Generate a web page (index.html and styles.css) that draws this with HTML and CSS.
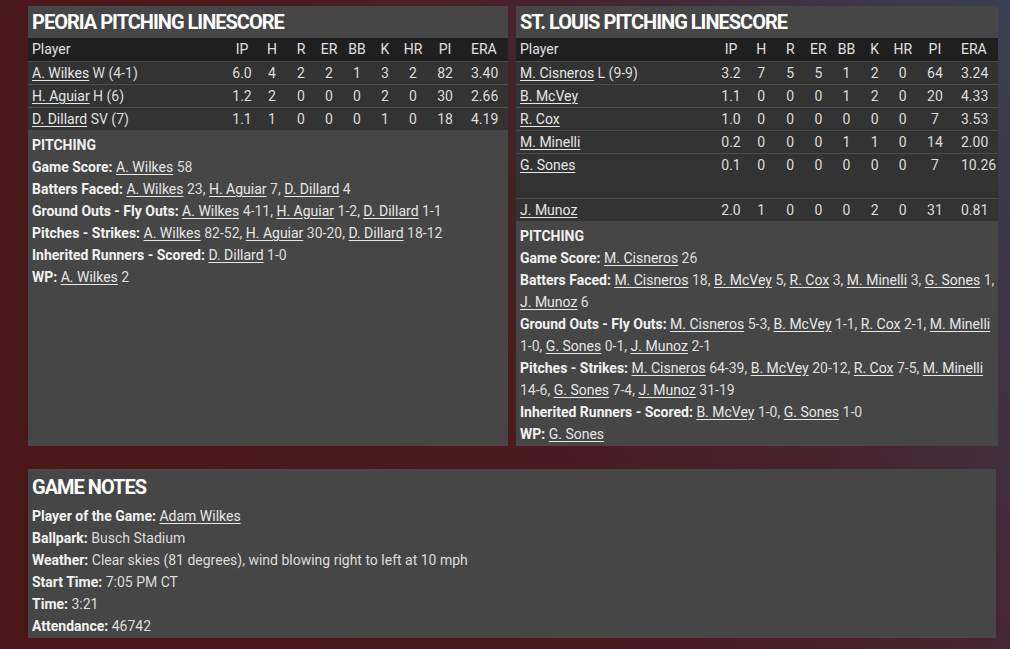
FILE: index.html
```html
<!DOCTYPE html>
<html>

<head>
    <title>Box Score - Pitching</title>
    <link rel="stylesheet" href="styles.css">
</head>

<body>
    <div class="page">
        <div class="top-row">
            <!-- Peoria -->
            <div class="panel">
                <h2 class="panel-title">PEORIA PITCHING LINESCORE</h2>
                <table class="linescore">
                    <colgroup>
                        <col class="c-name"><col class="c-ip"><col class="c-h"><col class="c-s"><col class="c-s">
                        <col class="c-s"><col class="c-s"><col class="c-s"><col class="c-pi"><col class="c-era">
                    </colgroup>
                    <tr>
                        <th class="name">Player</th><th>IP</th><th>H</th><th>R</th><th>ER</th><th>BB</th><th>K</th><th>HR</th><th>PI</th><th class="era">ERA</th>
                    </tr>
                    <tr>
                        <td class="name"><a href="#">A. Wilkes</a> W (4-1)</td><td>6.0</td><td>4</td><td>2</td><td>2</td><td>1</td><td>3</td><td>2</td><td>82</td><td class="era">3.40</td>
                    </tr>
                    <tr>
                        <td class="name"><a href="#">H. Aguiar</a> H (6)</td><td>1.2</td><td>2</td><td>0</td><td>0</td><td>0</td><td>2</td><td>0</td><td>30</td><td class="era">2.66</td>
                    </tr>
                    <tr>
                        <td class="name"><a href="#">D. Dillard</a> SV (7)</td><td>1.1</td><td>1</td><td>0</td><td>0</td><td>0</td><td>1</td><td>0</td><td>18</td><td class="era">4.19</td>
                    </tr>
                </table>
                <div class="notes">
                    <p class="label">PITCHING</p>
                    <p><span class="label">Game Score:</span> <a href="#">A. Wilkes</a> 58</p>
                    <p><span class="label">Batters Faced:</span> <a href="#">A. Wilkes</a> 23, <a href="#">H. Aguiar</a> 7, <a href="#">D. Dillard</a> 4</p>
                    <p><span class="label">Ground Outs - Fly Outs:</span> <a href="#">A. Wilkes</a> 4-11, <a href="#">H. Aguiar</a> 1-2, <a href="#">D. Dillard</a> 1-1</p>
                    <p><span class="label">Pitches - Strikes:</span> <a href="#">A. Wilkes</a> 82-52, <a href="#">H. Aguiar</a> 30-20, <a href="#">D. Dillard</a> 18-12</p>
                    <p><span class="label">Inherited Runners - Scored:</span> <a href="#">D. Dillard</a> 1-0</p>
                    <p><span class="label">WP:</span> <a href="#">A. Wilkes</a> 2</p>
                </div>
            </div>

            <!-- St. Louis -->
            <div class="panel">
                <h2 class="panel-title">ST. LOUIS PITCHING LINESCORE</h2>
                <table class="linescore">
                    <colgroup>
                        <col class="c-name"><col class="c-ip"><col class="c-h"><col class="c-s"><col class="c-s">
                        <col class="c-s"><col class="c-s"><col class="c-s"><col class="c-pi"><col class="c-era">
                    </colgroup>
                    <tr>
                        <th class="name">Player</th><th>IP</th><th>H</th><th>R</th><th>ER</th><th>BB</th><th>K</th><th>HR</th><th>PI</th><th class="era">ERA</th>
                    </tr>
                    <tr>
                        <td class="name"><a href="#">M. Cisneros</a> L (9-9)</td><td>3.2</td><td>7</td><td>5</td><td>5</td><td>1</td><td>2</td><td>0</td><td>64</td><td class="era">3.24</td>
                    </tr>
                    <tr>
                        <td class="name"><a href="#">B. McVey</a></td><td>1.1</td><td>0</td><td>0</td><td>0</td><td>1</td><td>2</td><td>0</td><td>20</td><td class="era">4.33</td>
                    </tr>
                    <tr>
                        <td class="name"><a href="#">R. Cox</a></td><td>1.0</td><td>0</td><td>0</td><td>0</td><td>0</td><td>0</td><td>0</td><td>7</td><td class="era">3.53</td>
                    </tr>
                    <tr>
                        <td class="name"><a href="#">M. Minelli</a></td><td>0.2</td><td>0</td><td>0</td><td>0</td><td>1</td><td>1</td><td>0</td><td>14</td><td class="era">2.00</td>
                    </tr>
                    <tr class="tall">
                        <td class="name"><a href="#">G. Sones</a></td><td>0.1</td><td>0</td><td>0</td><td>0</td><td>0</td><td>0</td><td>0</td><td>7</td><td class="era">10.26</td>
                    </tr>
                    <tr>
                        <td class="name"><a href="#">J. Munoz</a></td><td>2.0</td><td>1</td><td>0</td><td>0</td><td>0</td><td>2</td><td>0</td><td>31</td><td class="era">0.81</td>
                    </tr>
                </table>
                <div class="notes">
                    <p class="label">PITCHING</p>
                    <p><span class="label">Game Score:</span> <a href="#">M. Cisneros</a> 26</p>
                    <p><span class="label">Batters Faced:</span> <a href="#">M. Cisneros</a> 18, <a href="#">B. McVey</a> 5, <a href="#">R. Cox</a> 3, <a href="#">M. Minelli</a> 3, <a href="#">G. Sones</a> 1,<br><a href="#">J. Munoz</a> 6</p>
                    <p><span class="label">Ground Outs - Fly Outs:</span> <a href="#">M. Cisneros</a> 5-3, <a href="#">B. McVey</a> 1-1, <a href="#">R. Cox</a> 2-1, <a href="#">M. Minelli</a><br>1-0, <a href="#">G. Sones</a> 0-1, <a href="#">J. Munoz</a> 2-1</p>
                    <p><span class="label">Pitches - Strikes:</span> <a href="#">M. Cisneros</a> 64-39, <a href="#">B. McVey</a> 20-12, <a href="#">R. Cox</a> 7-5, <a href="#">M. Minelli</a><br>14-6, <a href="#">G. Sones</a> 7-4, <a href="#">J. Munoz</a> 31-19</p>
                    <p><span class="label">Inherited Runners - Scored:</span> <a href="#">B. McVey</a> 1-0, <a href="#">G. Sones</a> 1-0</p>
                    <p><span class="label">WP:</span> <a href="#">G. Sones</a></p>
                </div>
            </div>
        </div>

        <div class="panel game-notes">
            <h2 class="panel-title">GAME NOTES</h2>
            <div class="notes">
                <p><span class="label">Player of the Game:</span> <a href="#">Adam Wilkes</a></p>
                <p><span class="label">Ballpark:</span> Busch Stadium</p>
                <p><span class="label">Weather:</span> Clear skies (81 degrees), wind blowing right to left at 10 mph</p>
                <p><span class="label">Start Time:</span> 7:05 PM CT</p>
                <p><span class="label">Time:</span> 3:21</p>
                <p><span class="label">Attendance:</span> 46742</p>
            </div>
        </div>
    </div>
</body>

</html>
```

FILE: styles.css
```css
body {
    margin: 0;
    min-height: 649px;
    font-family: Roboto, 'Liberation Sans', sans-serif;
    font-size: 14px;
    color: #dcdcdc;
    background: linear-gradient(60deg, #4a1618 0%, #4a1a1f 45%, #472430 70%, #3e3443 85%, #3b4050 100%);
}

.page {
    width: 968px;
    padding: 6px 0 0 28px;
}

.top-row {
    display: flex;
    gap: 8px;
}

.panel {
    flex: 1;
    background: #464646;
    padding-bottom: 1px;
}

.panel-title {
    margin: 0;
    padding: 1px 4px 0 4px;
    height: 31px;
    font-size: 20px;
    line-height: 31px;
    font-weight: 700;
    letter-spacing: -1px;
    color: #fff;
}

a {
    color: #e6e6e6;
    text-decoration: underline;
    text-underline-offset: 2px;
}

/* Linescore table */
.linescore {
    width: 100%;
    border-collapse: collapse;
    table-layout: fixed;
}

.c-name { width: 199px; }
.c-ip { width: 30px; }
.c-h { width: 30px; }
.c-s { width: 28px; }
.c-pi { width: 36px; }
.c-era { width: 45px; }

.linescore th {
    background: #1f1f1f;
    font-weight: normal;
    color: #e0e0e0;
    height: 23px;
    padding: 0;
    text-align: center;
    line-height: 23px;
}

.linescore td {
    background: #333333;
    border-top: 1px solid #4b4b4b;
    height: 22px;
    padding: 0;
    text-align: center;
    vertical-align: top;
    line-height: 22px;
    white-space: nowrap;
}

.linescore .tall td {
    height: 44px;
}

.linescore .name {
    text-align: left;
    padding-left: 4px;
}

.linescore .era {
    text-align: left;
    padding-left: 8px;
}

/* Text blocks under the tables */
.notes {
    margin-top: 4px;
    padding: 0 4px;
}

.notes p {
    margin: 0;
    line-height: 22px;
    white-space: nowrap;
}

.label {
    font-weight: 700;
    color: #f2f2f2;
}

.game-notes {
    margin-top: 23px;
}

.game-notes .panel-title {
    padding-top: 3px;
    margin-bottom: 2px;
}

.game-notes .notes {
    margin-top: 0;
}
```
